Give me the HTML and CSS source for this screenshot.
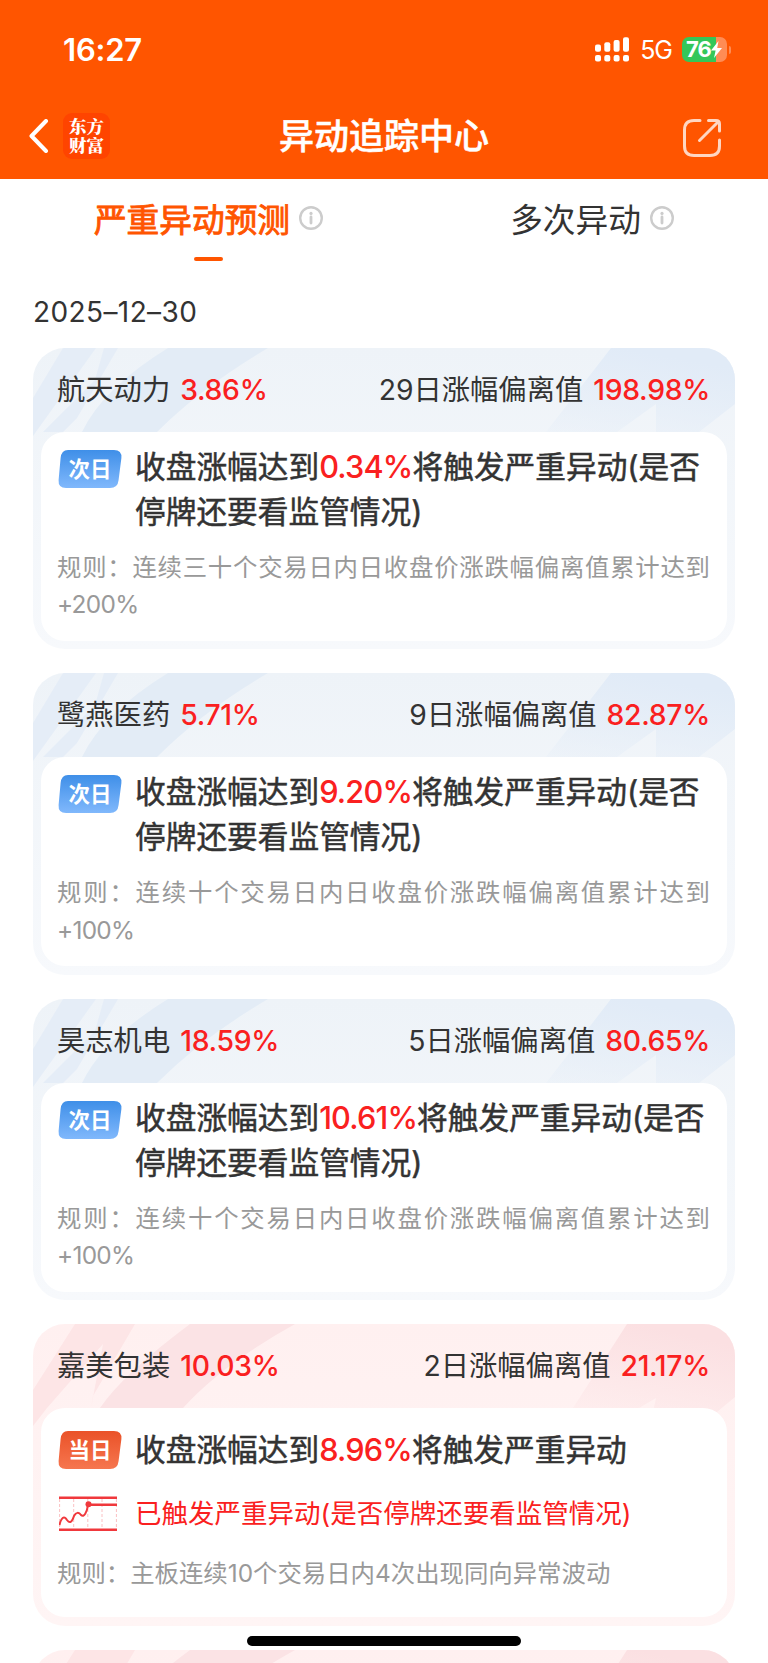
FILE: index.html
```
<!DOCTYPE html>
<html lang="zh-CN">
<head>
    <meta charset="UTF-8">
    <meta name="viewport" content="width=device-width, initial-scale=1.0">
    <title>异动追踪中心</title>
    <link rel="stylesheet" href="styles.css">
</head>
<body>
    <!-- shared shapes -->
    <svg class="defs" width="0" height="0">
        <defs>
            <linearGradient id="blueFade" x1="0" y1="1" x2="0.4" y2="0">
                <stop offset="0" stop-color="#e1ebf7" stop-opacity="0.2"/>
                <stop offset="1" stop-color="#e1ebf7"/>
            </linearGradient>
            <linearGradient id="redFade" x1="0" y1="1" x2="0.4" y2="0">
                <stop offset="0" stop-color="#fbe0e2" stop-opacity="0.2"/>
                <stop offset="1" stop-color="#fbe0e2"/>
            </linearGradient>
            <linearGradient id="blueBadge" x1="0" y1="0" x2="0" y2="1">
                <stop offset="0" stop-color="#3f8fe8"/>
                <stop offset="1" stop-color="#80b8fc"/>
            </linearGradient>
            <linearGradient id="redBadge" x1="0" y1="0" x2="0" y2="1">
                <stop offset="0" stop-color="#ea5228"/>
                <stop offset="1" stop-color="#f6764f"/>
            </linearGradient>
        </defs>
        <symbol id="streaksBlue" viewBox="0 0 702 110">
            <path fill="#e5edf7" d="M30 0H63L0 88V50Z"/>
            <path fill="#e5edf7" d="M71 0H85L44 70L30 84H10L62 32Z"/>
            <path fill="#e3ecf6" d="M135 0H235Q170 38 124 84H49Q70 40 135 0Z"/>
            <path fill="url(#blueFade)" d="M578 0H702V56L666 84H623V56L584 84H513Z"/>
        </symbol>
        <symbol id="streaksRed" viewBox="0 0 702 110">
            <path fill="#fde5e6" d="M42 0H102L60 72L58 84L70 20L14 84L0 102V66Z"/>
            <path fill="#fbe3e5" d="M157 0H262Q190 40 150 84H67Q90 50 157 0Z"/>
            <path fill="url(#redFade)" d="M594 0H702V73L684 88H620L623 74L606 84H540Z"/>
        </symbol>
        <symbol id="info" viewBox="0 0 24 24">
            <circle cx="12" cy="12" r="10.8" fill="none" stroke="#ccc" stroke-width="2.4"/>
            <circle cx="12" cy="7.4" r="1.6" fill="#ccc"/>
            <path d="M12 11V17" stroke="#ccc" stroke-width="2.8" stroke-linecap="round"/>
        </symbol>
        <symbol id="badge" viewBox="0 0 64 38">
            <path d="M10 0H56Q64 0 63.4 8L60.6 30Q59.8 38 52 38H8Q0 38 0.6 30L2.6 8Q3.4 0 10 0Z"/>
        </symbol>
    </svg>

    <header class="header">
        <div class="status">
            <span class="time">16:27</span>
            <div class="status-right">
                <svg class="signal" viewBox="0 0 34 25" fill="#fff">
                    <rect x="0" y="7.5" width="6" height="7.2" rx="2"/>
                    <rect x="9.3" y="5.3" width="6" height="9.4" rx="2"/>
                    <rect x="18.6" y="3" width="6" height="11.7" rx="2"/>
                    <rect x="28" y="0.3" width="6" height="14.4" rx="2"/>
                    <rect x="0" y="18" width="6" height="6.6" rx="2"/>
                    <rect x="9.3" y="18" width="6" height="6.6" rx="2"/>
                    <rect x="18.6" y="18" width="6" height="6.6" rx="2"/>
                    <rect x="28" y="18" width="6" height="6.6" rx="2"/>
                </svg>
                <span class="network">5G</span>
                <div class="battery">
                    <span>76</span>
                    <svg class="bolt" viewBox="0 0 11 17"><path d="M7.5 0L0 9.6H4.6L3 17L11 7H6.2Z" fill="#fff"/></svg>
                </div>
            </div>
        </div>
        <div class="nav">
            <div class="nav-left">
                <svg class="back" viewBox="0 0 20 34"><path d="M17 2L2.5 17L17 32" fill="none" stroke="#fff" stroke-width="4" stroke-linecap="round" stroke-linejoin="round"/></svg>
                <div class="logo">东方<br>财富</div>
            </div>
            <h1>异动追踪中心</h1>
            <svg class="share" viewBox="0 0 40 40" fill="none" stroke="#ffd6c2" stroke-width="3" stroke-linecap="round" stroke-linejoin="round">
                <path d="M18 2.5H12Q2.5 2.5 2.5 12V28Q2.5 37.5 12 37.5H28Q37.5 37.5 37.5 28V22"/>
                <path d="M26.5 2.5H34Q37.5 2.5 37.5 6V13M36.5 3.5L17.5 22.5"/>
            </svg>
        </div>
    </header>

    <nav class="tabs">
        <div class="tab active"><span>严重异动预测</span><svg><use href="#info"/></svg></div>
        <div class="tab"><span>多次异动</span><svg><use href="#info"/></svg></div>
    </nav>

    <main>
        <div class="date">2025–12–30</div>

        <section class="card">
            <svg class="streaks"><use href="#streaksBlue"/></svg>
            <div class="card-head">
                <div>航天动力<b>3.86%</b></div>
                <div>29日涨幅偏离值<b>198.98%</b></div>
            </div>
            <div class="card-body">
                <div class="row">
                    <div class="badge"><svg fill="url(#blueBadge)"><use href="#badge"/></svg><span>次日</span></div>
                    <p class="trigger">收盘涨幅达到<em>0.34%</em>将触发严重异动(是否停牌还要看监管情况)</p>
                </div>
                <p class="rule">规则：连续三十个交易日内日收盘价涨跌幅偏离值累计达到 <span>+200%</span></p>
            </div>
        </section>

        <section class="card">
            <svg class="streaks"><use href="#streaksBlue"/></svg>
            <div class="card-head">
                <div>鹭燕医药<b>5.71%</b></div>
                <div>9日涨幅偏离值<b>82.87%</b></div>
            </div>
            <div class="card-body">
                <div class="row">
                    <div class="badge"><svg fill="url(#blueBadge)"><use href="#badge"/></svg><span>次日</span></div>
                    <p class="trigger">收盘涨幅达到<em>9.20%</em>将触发严重异动(是否停牌还要看监管情况)</p>
                </div>
                <p class="rule">规则：连续十个交易日内日收盘价涨跌幅偏离值累计达到 <span>+100%</span></p>
            </div>
        </section>

        <section class="card">
            <svg class="streaks"><use href="#streaksBlue"/></svg>
            <div class="card-head">
                <div>昊志机电<b>18.59%</b></div>
                <div>5日涨幅偏离值<b>80.65%</b></div>
            </div>
            <div class="card-body">
                <div class="row">
                    <div class="badge"><svg fill="url(#blueBadge)"><use href="#badge"/></svg><span>次日</span></div>
                    <p class="trigger">收盘涨幅达到<em>10.61%</em>将触发严重异动(是否停牌还要看监管情况)</p>
                </div>
                <p class="rule">规则：连续十个交易日内日收盘价涨跌幅偏离值累计达到 <span>+100%</span></p>
            </div>
        </section>

        <section class="card red">
            <svg class="streaks"><use href="#streaksRed"/></svg>
            <div class="card-head">
                <div>嘉美包装<b>10.03%</b></div>
                <div>2日涨幅偏离值<b>21.17%</b></div>
            </div>
            <div class="card-body">
                <div class="row">
                    <div class="badge"><svg fill="url(#redBadge)"><use href="#badge"/></svg><span>当日</span></div>
                    <p class="trigger">收盘涨幅达到<em>8.96%</em>将触发严重异动</p>
                </div>
                <div class="row done">
                    <svg class="chart" viewBox="0 0 58 36" fill="none" stroke="#f0383c">
                        <path d="M0.6 3V33M14.7 3V33M28.8 3V33M43 3V33M57.4 3V33" stroke="#fbc0c2" stroke-dasharray="3 2"/>
                        <path d="M0 1.7H58M0 33.8H58" stroke-width="2.4"/>
                        <path d="M0.5 29C2 22 5 19 8 24C11 28 13 26 15 20C17 16 20 16 22 19C25 22 28 16 29 9" stroke-width="2"/>
                        <path d="M29 8.7H58" stroke-width="2.4"/>
                        <circle cx="29.5" cy="8.3" r="3" fill="#f0383c" stroke="none"/>
                    </svg>
                    <p>已触发严重异动(是否停牌还要看监管情况)</p>
                </div>
                <p class="rule">规则：主板连续10个交易日内4次出现同向异常波动</p>
            </div>
        </section>

        <section class="card red">
            <svg class="streaks"><use href="#streaksRed"/></svg>
        </section>
    </main>

    <div class="home-bar"></div>
</body>
</html>
```
FILE: styles.css
```
* {
    box-sizing: border-box;
}
body {
    display: flex;
    flex-direction: column;
    height: 1663px;
    margin: 0;
    overflow: hidden;
    font-family: Inter, 'Noto Sans CJK SC', sans-serif;
    background: #fff;
    color: #333;
}
h1, p {
    margin: 0;
}
svg {
    display: block;
    flex: none;
}
.defs {
    position: absolute;
}

/* header */
.header {
    flex: none;
    height: 179px;
    background: #ff5500;
    color: #fff;
}
.status {
    display: flex;
    justify-content: space-between;
    align-items: center;
    height: 98px;
    padding: 0 37px 0 63px;
}
.time {
    font-size: 31px;
    font-weight: 600;
    letter-spacing: -0.2px;
}
.status-right {
    display: flex;
    align-items: center;
}
.signal {
    width: 34px;
    height: 25px;
}
.network {
    margin: 2px 10px 0 11px;
    font-size: 25px;
    letter-spacing: -1px;
}
.battery {
    position: relative;
    display: flex;
    align-items: center;
    width: 45px;
    height: 25px;
    margin-right: 4px;
    padding-left: 4px;
    border-radius: 7px;
    background: linear-gradient(90deg, #34c759 34.5px, #ff8c55 34.5px);
    font-size: 22px;
    font-weight: 700;
    letter-spacing: -1px;
}
.battery::after {
    content: '';
    position: absolute;
    right: -4px;
    top: 9px;
    width: 2.5px;
    height: 8px;
    border-radius: 0 3px 3px 0;
    background: #ff8c55;
}
.bolt {
    width: 11px;
    height: 17px;
}
.nav {
    display: grid;
    grid-template-columns: 1fr auto 1fr;
    align-items: center;
    height: 76px;
    padding: 0 46px 0 29px;
}
.nav-left {
    display: flex;
    align-items: center;
    gap: 14px;
}
.back {
    width: 20px;
    height: 34px;
}
.logo {
    width: 47px;
    height: 46px;
    padding-top: 3px;
    border-radius: 9px;
    background: #ff4400;
    font-family: 'Noto Serif CJK SC', 'Noto Sans CJK SC', serif;
    font-size: 17.5px;
    font-weight: 900;
    line-height: 19px;
    text-align: center;
}
.nav h1 {
    padding-left: 17px;
    font-size: 35px;
    font-weight: 500;
    -webkit-text-stroke: 0.5px #fff;
    line-height: 50px;
}
.share {
    justify-self: end;
    width: 40px;
    height: 40px;
    margin-top: 4px;
}

/* tabs */
.tabs {
    display: grid;
    flex: none;
    grid-template-columns: 417px 350px;
    height: 88px;
}
.tab {
    position: relative;
    display: flex;
    justify-content: center;
    align-items: center;
    gap: 9px;
    height: 78px;
    font-size: 32.7px;
}
.tab span {
    margin-top: -1px;
}
.tab svg {
    width: 24px;
    height: 24px;
}
.tab.active span {
    color: #ff5500;
    -webkit-text-stroke: 0.9px #ff5500;
}
.tab.active::after {
    content: '';
    position: absolute;
    left: 194px;
    bottom: -4px;
    width: 29px;
    height: 4px;
    border-radius: 2px;
    background: #ff5500;
}

/* list */
main {
    flex: 1;
    min-height: 0;
    padding: 0 33px;
    overflow: hidden;
}
.date {
    height: 80.5px;
    line-height: 90px;
    font-size: 28px;
    letter-spacing: 0.4px;
}
.card {
    position: relative;
    height: 301.5px;
    margin-bottom: 24px;
    padding: 0 8px 8px;
    border-radius: 32px;
    overflow: hidden;
    background: linear-gradient(#eef3f8, #f7f9fc);
}
.card.red {
    background: linear-gradient(#fff0f0, #fff5f5);
}
.streaks {
    position: absolute;
    left: 0;
    top: 0;
    width: 702px;
    height: 110px;
}
.card-head {
    position: relative;
    display: flex;
    justify-content: space-between;
    align-items: center;
    height: 84px;
    padding: 0 17px 5px 16px;
    font-size: 28.3px;
}
.card-head b {
    margin-left: 10px;
    color: #fa2020;
    font-size: 28.3px;
    font-weight: 500;
    letter-spacing: -0.3px;
}
.card-body {
    position: relative;
    height: 209px;
    padding: 12px 17px 0 16px;
    border-radius: 24px;
    background: #fff;
}
.row {
    display: flex;
}
.badge {
    position: relative;
    flex: none;
    width: 64px;
    height: 38px;
    margin: 6px 13px 0 1px;
    color: #fff;
    font-size: 21.5px;
    font-weight: 700;
    line-height: 38px;
    text-align: center;
}
.badge svg {
    position: absolute;
    width: 64px;
    height: 38px;
}
.badge span {
    position: relative;
}
.trigger {
    font-size: 30.7px;
    line-height: 45.2px;
    -webkit-text-stroke: 0.5px;
}
.trigger em {
    color: #fa2020;
    font-style: normal;
    font-weight: 500;
    letter-spacing: -0.8px;
    -webkit-text-stroke: 0;
}
.rule {
    margin-top: 15px;
    color: #999;
    font-size: 24.4px;
    line-height: 37.5px;
    text-align: justify;
}
.rule span {
    letter-spacing: -0.7px;
}
.red .card-body {
    padding-top: 19px;
}
.red .badge {
    margin-top: 4px;
}
.done {
    height: 36px;
    margin-top: 24px;
    color: #fa2020;
    font-size: 26.5px;
    line-height: 34px;
}
.done .chart {
    width: 58px;
    height: 36px;
    margin: 0 18px 0 2px;
}
.red .rule {
    margin-top: 23px;
}

.home-bar {
    position: fixed;
    left: 247px;
    bottom: 17px;
    width: 274px;
    height: 10px;
    border-radius: 5px;
    background: #000;
}
```
